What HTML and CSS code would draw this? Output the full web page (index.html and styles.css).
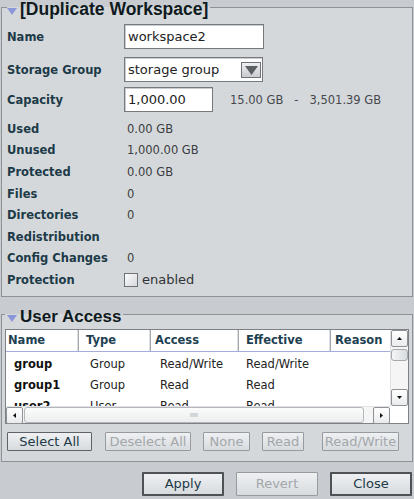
FILE: index.html
```html
<!DOCTYPE html>
<html>
<head>
<meta charset="utf-8">
<link rel="stylesheet" href="styles.css">
</head>
<body>
<div class="page">
  <fieldset class="group group-workspace">
    <legend class="group-title"><svg class="twisty" viewBox="0 0 10 7"><polygon points="0,0 10,0 5,7"/></svg>[Duplicate Workspace]</legend>
    <div class="form-row row-name"><span class="label">Name</span><input class="textbox textbox-name" value="workspace2" readonly></div>
    <div class="form-row row-storage"><span class="label">Storage Group</span>
      <div class="select"><span>storage group</span><span class="select-btn"><svg viewBox="0 0 13 9"><polygon points="0,0 13,0 6.5,9"/></svg></span></div>
    </div>
    <div class="form-row row-capacity"><span class="label">Capacity</span><input class="textbox textbox-capacity" value="1,000.00" readonly><span class="range">15.00 GB   -   3,501.39 GB</span></div>
    <div class="form-row info-row"><span class="label">Used</span><span class="value">0.00 GB</span></div>
    <div class="form-row info-row"><span class="label">Unused</span><span class="value">1,000.00 GB</span></div>
    <div class="form-row info-row"><span class="label">Protected</span><span class="value">0.00 GB</span></div>
    <div class="form-row info-row"><span class="label">Files</span><span class="value">0</span></div>
    <div class="form-row info-row"><span class="label">Directories</span><span class="value">0</span></div>
    <div class="form-row info-row"><span class="label">Redistribution</span><span class="value"></span></div>
    <div class="form-row info-row"><span class="label">Config Changes</span><span class="value">0</span></div>
    <div class="form-row info-row"><span class="label">Protection</span><span class="check"><span class="checkbox"></span>enabled</span></div>
  </fieldset>

  <fieldset class="group group-access">
    <legend class="group-title group-title-access"><svg class="twisty" viewBox="0 0 10 7"><polygon points="0,0 10,0 5,7"/></svg>User Access</legend>
    <div class="table">
      <div class="table-main">
        <div class="thead">
          <div class="th">Name</div><div class="th">Type</div><div class="th">Access</div><div class="th">Effective</div><div class="th">Reason</div>
        </div>
        <div class="tbody">
          <div class="tr"><div class="td td-name">group</div><div class="td">Group</div><div class="td">Read/Write</div><div class="td">Read/Write</div><div class="td"></div></div>
          <div class="tr"><div class="td td-name">group1</div><div class="td">Group</div><div class="td">Read</div><div class="td">Read</div><div class="td"></div></div>
          <div class="tr"><div class="td td-name">user2</div><div class="td">User</div><div class="td">Read</div><div class="td">Read</div><div class="td"></div></div>
        </div>
      </div>
      <div class="vscroll">
        <div class="sb-btn"><svg viewBox="0 0 5 3"><polygon points="0,3 5,3 2.5,0"/></svg></div>
        <div class="vtrack"><div class="vthumb"></div></div>
        <div class="sb-btn"><svg viewBox="0 0 5 3"><polygon points="0,0 5,0 2.5,3"/></svg></div>
      </div>
      <div class="hscroll">
        <div class="sb-btn"><svg class="sb-h" viewBox="0 0 3 5"><polygon points="3,0 3,5 0,2.5"/></svg></div>
        <div class="htrack"><div class="hthumb"><span class="grip"></span></div></div>
        <div class="sb-btn"><svg class="sb-h" viewBox="0 0 3 5"><polygon points="0,0 0,5 3,2.5"/></svg></div>
      </div>
      <div class="corner"></div>
    </div>
    <div class="actions">
      <button class="btn btn-enabled btn-select-all">Select All</button>
      <button class="btn btn-deselect">Deselect All</button>
      <button class="btn btn-none">None</button>
      <button class="btn btn-read">Read</button>
      <button class="btn btn-readwrite">Read/Write</button>
    </div>
  </fieldset>

  <div class="footer">
    <button class="btn btn-lg btn-default">Apply</button>
    <button class="btn btn-lg">Revert</button>
    <button class="btn btn-lg btn-default">Close</button>
  </div>
</div>
</body>
</html>
```

FILE: styles.css
```css
* { box-sizing: border-box; }
html, body { margin: 0; }
body {
  background: #c8ccd0;
  font-family: "DejaVu Sans", sans-serif;
  width: 414px;
  height: 499px;
  overflow: hidden;
}
.page { padding: 0 1px; }

.group {
  margin: 0;
  min-width: 0;
  border: 1px solid #8e9296;
  background: #d5d8db;
}
.group-workspace { padding: 9px 3px 5px 5px; }
.group-access { margin-top: 10px; padding: 7px 3px 10px 3px; }

.group-title {
  padding: 4px 2px 0 0;
  line-height: 11px;
  font-family: "Liberation Sans", Arial, sans-serif;
  font-weight: bold;
  font-size: 17.5px;
  color: #0f1a20;
  white-space: nowrap;
}
.group-title-access { padding-left: 2px; font-size: 17px; }
.twisty {
  width: 10px;
  height: 7px;
  margin-right: 3px;
  vertical-align: 0;
  fill: #8b97d9;
}

.form-row { display: flex; align-items: center; height: 25px; }
.row-name { margin-bottom: 8px; }
.row-storage { margin-bottom: 5px; }
.row-capacity { margin-bottom: 6px; }
.info-row { height: 21.6px; }

.label {
  width: 117px;
  flex: none;
  font-weight: bold;
  font-size: 11.5px;
  color: #1c3a47;
}
.value { padding-left: 3px; font-size: 11.5px; color: #3a3d40; }

.textbox {
  height: 25px;
  margin: 0;
  border: 1px solid #767a7e;
  background: #fff;
  font: 13px "DejaVu Sans", sans-serif;
  color: #222;
  padding: 0 3px;
  outline: none;
  box-shadow: inset 1px 1px 0 #c9ccd0;
}
.textbox-name { width: 140px; }
.textbox-capacity { width: 89px; }

.select {
  width: 139px;
  height: 25px;
  border: 1px solid #767a7e;
  background: #fff;
  box-shadow: inset 1px 1px 0 #c9ccd0;
  display: flex;
  align-items: center;
  justify-content: space-between;
  padding: 0 1px 0 3px;
  font-size: 13px;
  color: #222;
}
.select-btn {
  width: 20px;
  height: 16px;
  margin-top: 1px;
  border: 1px solid #6f7377;
  background: linear-gradient(#eceeef, #c9ccd0);
  display: flex;
  align-items: center;
  justify-content: center;
}
.select-btn svg { width: 13px; height: 9px; fill: #5c6064; }

.range {
  margin-left: 17px;
  font-size: 11.5px;
  color: #45494d;
  white-space: pre;
}

.check { display: flex; align-items: center; font-size: 13px; color: #303336; }
.checkbox {
  width: 14px;
  height: 14px;
  margin-right: 4px;
  border: 1px solid #6f7377;
  background: linear-gradient(135deg, #fdfdfd, #d5d8db);
}

/* table */
.table {
  width: 404px;
  height: 95px;
  border: 1px solid #7d8185;
  background: #fff;
  display: grid;
  grid-template-columns: 384px 18px;
  grid-template-rows: 76px 17px;
}
.table-main { overflow: hidden; }
.thead, .tr {
  display: grid;
  grid-template-columns: 73px 72px 88px 92px 59px;
}
.thead {
  height: 22px;
  border-bottom: 1px solid #a3aedc;
}
.th {
  line-height: 21px;
  font-weight: bold;
  font-size: 11.5px;
  color: #1d4150;
  border-right: 1px solid #a4a8ac;
  box-shadow: inset -1px 0 0 #dcdfe2;
  white-space: nowrap;
  overflow: hidden;
}
.th:nth-child(1) { padding-left: 2px; }
.th:nth-child(2) { padding-left: 7px; }
.th:nth-child(3) { padding-left: 4px; }
.th:nth-child(4) { padding-left: 7px; }
.th:nth-child(5) { padding-left: 4px; border-right: none; box-shadow: none; }
.tbody { padding-top: 2px; }
.tr { height: 21px; }
.td {
  line-height: 21px;
  font-size: 11.5px;
  color: #222;
  white-space: nowrap;
}
.td:nth-child(1) { padding-left: 8px; }
.td:nth-child(2) { padding-left: 11px; }
.td:nth-child(3) { padding-left: 9px; }
.td:nth-child(4) { padding-left: 7px; }
.td-name { font-weight: bold; color: #111; }

.sb-btn {
  width: 17px;
  height: 17px;
  flex: none;
  border: 1px solid #8e9296;
  border-radius: 2px;
  background: linear-gradient(#ffffff, #e9ebed);
  display: flex;
  align-items: center;
  justify-content: center;
}
.sb-btn svg { width: 5px; height: 3px; fill: #111; }
.sb-btn svg.sb-h { width: 3px; height: 5px; }

.vscroll {
  display: flex;
  flex-direction: column;
  background: #f5f5f5;
  border-left: 1px solid #e0e2e4;
}
.vtrack { flex: 1; padding-top: 2px; }
.vthumb {
  height: 12px;
  border: 1px solid #a6aaae;
  border-radius: 3px;
  background: linear-gradient(90deg, #f4f5f6, #d9dcdf);
}

.hscroll {
  display: flex;
  background: #f5f5f5;
  border-top: 1px solid #e0e2e4;
}
.htrack { flex: 1; padding: 0 9px 0 1px; }
.hthumb {
  height: 100%;
  border: 1px solid #b3b7bb;
  border-radius: 3px;
  background: linear-gradient(#fbfbfb, #eceeef);
  display: flex;
  align-items: center;
  justify-content: center;
}
.grip { width: 8px; height: 4px; background: #d3d6d9; }
.corner { background: #fff; }

/* buttons */
.btn {
  margin: 0;
  padding: 0;
  height: 19px;
  border: 1px solid #979b9f;
  border-radius: 1px;
  background: linear-gradient(#eef0f2, #d8dbde);
  font: 13px "DejaVu Sans", sans-serif;
  color: #a3a7ab;
  display: flex;
  align-items: center;
  justify-content: center;
}
.btn-enabled { color: #1c3a47; border-color: #5f6367; }
.actions { display: flex; gap: 12px; margin-top: 8px; padding-left: 2px; }
.btn-select-all { width: 85px; }
.btn-deselect { width: 86px; margin-left: 1px; }
.btn-none { width: 47px; }
.btn-read { width: 42px; }
.btn-readwrite { width: 77px; margin-left: 6px; }

.footer {
  display: flex;
  justify-content: flex-end;
  gap: 12px;
  margin-top: 10px;
  padding-right: 1px;
}
.btn-lg { width: 82px; height: 24px; }
.btn-default { border: 2px solid #4e5256; color: #1c3a47; }
```
